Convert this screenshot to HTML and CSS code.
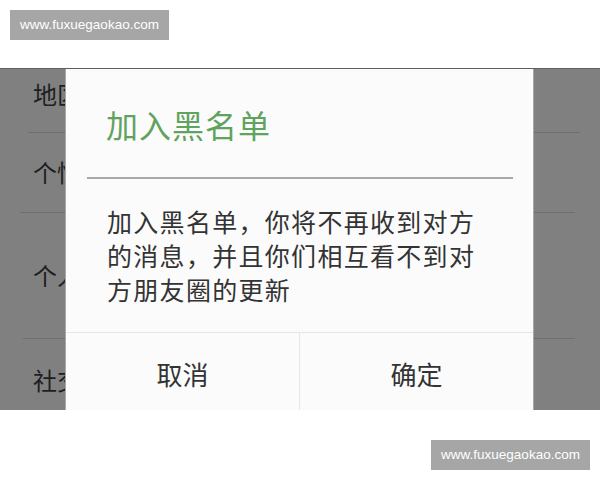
FILE: index.html
```html
<!DOCTYPE html>
<html lang="zh-CN">
<head>
<meta charset="utf-8">
<title>加入黑名单</title>
<link rel="stylesheet" href="styles.css">
</head>
<body>
<div class="page">
  <header class="top">
    <div class="mark">www.fuxuegaokao.com</div>
  </header>
  <section class="screen">
    <div class="list">
      <div class="row r1">地区</div>
      <div class="sep s1"></div>
      <div class="row r2">个性签名</div>
      <div class="sep s2"></div>
      <div class="row r3">个人相册</div>
      <div class="sep s3"></div>
      <div class="row r4">社交资料</div>
    </div>
    <div class="dialog">
      <div class="title">加入黑名单</div>
      <div class="rule"></div>
      <div class="msg">加入黑名单，你将不再收到对方的消息，并且你们相互看不到对方朋友圈的更新</div>
      <div class="actions">
        <div class="btn">取消</div>
        <div class="btn">确定</div>
      </div>
    </div>
  </section>
  <footer class="bottom">
    <div class="mark">www.fuxuegaokao.com</div>
  </footer>
</div>
</body>
</html>
```
FILE: styles.css
```css
* { box-sizing: border-box; }
html, body { margin: 0; padding: 0; background: #ffffff; }
.page {
  width: 600px;
  height: 480px;
  overflow: hidden;
  font-family: "Noto Sans CJK SC", "Noto Sans", sans-serif;
}
.top {
  height: 68px;
  padding: 10px 0 0 10px;
}
.mark {
  width: 159px;
  height: 30px;
  background: #a6a6a6;
  color: #ffffff;
  font-family: "Liberation Sans", Arial, sans-serif;
  font-size: 13.5px;
  line-height: 30px;
  text-align: center;
}
.screen {
  position: relative;
  height: 342px;
  background: #808080;
  border-top: 1px solid #5e5e5e;
  overflow: hidden;
}
.list { display: flex; flex-direction: column; }
.row {
  padding-left: 33px;
  font-size: 24px;
  line-height: 24px;
  color: #1e1e1e;
  white-space: nowrap;
}
.r1 { height: 63px; padding-top: 13px; }
.r2 { height: 79px; padding-top: 27px; }
.r3 { height: 125px; padding-top: 50px; }
.r4 { height: 60px; padding-top: 29px; }
.sep { height: 1px; background: #6f6f6f; margin-right: 20px; }
.s1 { margin-left: 28px; }
.s2 { margin-left: 20px; margin-right: 25px; }
.s3 { margin-left: 23px; margin-right: 25px; }
.dialog {
  position: absolute;
  left: 66px;
  top: 0;
  width: 467px;
  height: 400px;
  background: #fbfbfb;
  box-shadow: 0 0 0 1px #a8a8a8;
}
.title {
  padding: 35px 0 0 40px;
  height: 108px;
  font-size: 32px;
  line-height: 40px;
  letter-spacing: 1px;
  color: #5fa35f;
}
.rule {
  height: 2px;
  margin: 0 20px 0 21px;
  background: #a9a9a9;
}
.msg {
  padding: 25px 41px 0 41px;
  height: 153px;
  font-size: 25px;
  line-height: 34px;
  letter-spacing: 1.3px;
  color: #333333;
}
.actions {
  display: grid;
  grid-template-columns: 233px 1fr;
  border-top: 1px solid #e6e6e6;
}
.btn {
  height: 86px;
  padding-bottom: 6px;
  display: flex;
  align-items: center;
  justify-content: center;
  font-size: 26px;
  color: #333333;
}
.btn + .btn { border-left: 1px solid #e6e6e6; }
.bottom {
  height: 70px;
  padding: 30px 10px 0 0;
  display: flex;
  justify-content: flex-end;
}
```
